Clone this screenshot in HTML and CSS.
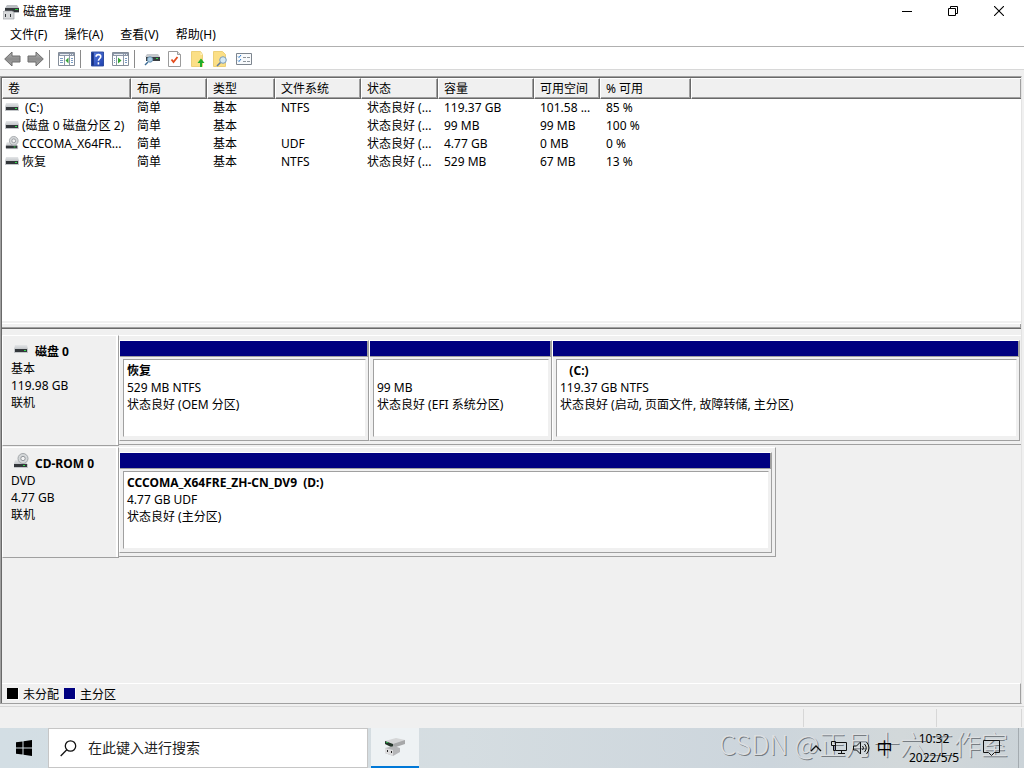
FILE: index.html
```html
<!DOCTYPE html>
<html lang="zh-CN">
<head>
<meta charset="utf-8">
<title>磁盘管理</title>
<link rel="stylesheet" href="styles.css">
</head>
<body>
<svg class="defs" aria-hidden="true">
  <defs>
    <linearGradient id="metal" x1="0" y1="0" x2="0" y2="1"><stop offset="0" stop-color="#e4e6e8"/><stop offset="1" stop-color="#c3c6c9"/></linearGradient>
    <linearGradient id="arrow" x1="0" y1="0" x2="0" y2="1"><stop offset="0" stop-color="#b4b4b4"/><stop offset=".5" stop-color="#8d8d8d"/><stop offset="1" stop-color="#a8a8a8"/></linearGradient>
    <linearGradient id="help" x1="0" y1="0" x2="1" y2="1"><stop offset="0" stop-color="#5a7fe0"/><stop offset="1" stop-color="#1d3fae"/></linearGradient>
    <symbol id="drive" viewBox="0 0 14 16">
      <path d="M1 4h12l1 4H0z" fill="url(#metal)"/><path d="M0 8h14v4H0z" fill="#c3c6c9"/><path d="M1 8h12v3H1z" fill="#33373b"/><path d="M10 9h2v1h-2z" fill="#2fe04a"/>
    </symbol>
    <symbol id="cd" viewBox="0 0 16 16">
      <path d="M2 7h10l2 4H1z" fill="url(#metal)"/><path d="M1 11h14v4H1z" fill="#c3c6c9"/><path d="M1 11h13v3H1z" fill="#33373b"/><path d="M10 12h2v1h-2z" fill="#2fe04a"/>
      <circle cx="10" cy="5.500" r="5" fill="#d4d7d9" stroke="#a3a7aa"/><circle cx="10" cy="5.500" r="2.200" fill="#f4f4f4" stroke="#92969a"/>
    </symbol>
    <symbol id="app" viewBox="0 0 16 16">
      <path d="M4 1h10l2 3v5H2V4z" fill="#babdc1"/><path d="M2 4h14v4H2z" fill="#34383b"/><path d="M12 5h3v1h-3z" fill="#26d43a"/><path d="M1 7h8l2 1v7H0V8z" fill="#d7d9db" stroke="#92969a" stroke-width=".6"/><path d="M2 10h1v3H2zM7 10h1v3H7z" fill="#303437"/>
    </symbol>
  </defs>
</svg>

<header class="titlebar">
  <svg class="app-icon" width="16" height="16"><use href="#app"/></svg>
  <h1 class="title">磁盘管理</h1>
  <div class="window-buttons">
    <button type="button" aria-label="最小化"><svg width="10" height="10" viewBox="0 0 10 10"><path d="M0 5h10v1H0z"/></svg></button>
    <button type="button" aria-label="还原"><svg width="10" height="10" viewBox="0 0 10 10" fill="none" stroke="#000"><path d="M.5 2.500h7v7h-7zM2.500 2.500v-2h7v7h-2"/></svg></button>
    <button type="button" aria-label="关闭"><svg width="10" height="10" viewBox="0 0 10 10" stroke="#000" stroke-width="1.100"><path d="M0 0l10 10M10 0L0 10"/></svg></button>
  </div>
</header>

<nav class="menubar">
  <button type="button">文件(F)</button>
  <button type="button">操作(A)</button>
  <button type="button">查看(V)</button>
  <button type="button">帮助(H)</button>
</nav>

<div class="toolbar" role="toolbar">
  <button type="button" aria-label="后退"><svg width="17" height="16" viewBox="0 0 17 16"><path d="M.7 8L8 1v4h8v6H8v4z" fill="url(#arrow)" stroke="#6c6c6c"/></svg></button>
  <button type="button" aria-label="前进"><svg width="17" height="16" viewBox="0 0 17 16"><path d="M16.300 8L9 1v4H1v6h8v4z" fill="url(#arrow)" stroke="#6c6c6c"/></svg></button>
  <span class="sep"></span>
  <button type="button" aria-label="显示控制台树"><svg width="17" height="14" viewBox="0 0 17 14"><path d="M.5.500h16v13H.5z" fill="#fff" stroke="#848d99"/><path d="M1 1h15v3H1z" fill="#8c97a8"/><path d="M2 2.500h9M12 2.500h1M14 2.500h1" stroke="#e7ebf0"/><path d="M6.500 4v9M11.500 4v9" stroke="#8c97a8"/><path d="M2 6.500h3M2 8.500h3M2 10.500h3M13 6.500h2M13 8.500h2M13 10.500h2" stroke="#7a9cc4"/><path d="M10.500 5.500v6L7.500 8.500z" fill="#35a535"/></svg></button>
  <span class="sep"></span>
  <button type="button" aria-label="帮助"><svg width="13" height="16" viewBox="0 0 14 16"><path d="M.5.500h13v15H.5z" fill="url(#help)" stroke="#23439a"/><path d="M1 1h2v14H1z" fill="#173184"/><path d="M5.500 5.500c0-3 5-3 5 0 0 2-2.500 2-2.500 4.500M8 11.500V14" fill="none" stroke="#fff" stroke-width="1.700"/></svg></button>
  <button type="button" aria-label="显示操作窗格"><svg width="17" height="14" viewBox="0 0 17 14"><path d="M.5.500h16v13H.5z" fill="#fff" stroke="#848d99"/><path d="M1 1h15v3H1z" fill="#8c97a8"/><path d="M2 2.500h9M12 2.500h1M14 2.500h1" stroke="#e7ebf0"/><path d="M4.500 4v9M11.500 4v9" stroke="#8c97a8"/><path d="M2 6.500h1M2 8.500h1M2 10.500h1M13 6.500h2M13 8.500h2M13 10.500h2" stroke="#7a9cc4"/><path d="M6 5.500v6l3.500-3z" fill="#35a535"/></svg></button>
  <span class="sep"></span>
  <button type="button" aria-label="磁盘"><svg width="16" height="16" viewBox="0 0 16 16"><path d="M3 3h11l2 3H1z" fill="#c5c9cd"/><path d="M2 6h14v4H2z" fill="#393e42"/><path d="M12 7h2v1h-2z" fill="#35d94a"/><path d="M1 14l3-3" stroke="#3b6b94" stroke-width="1.500"/><circle cx="6" cy="8.500" r="2.700" fill="#a9cbe2" stroke="#6c93b2"/></svg></button>
  <button type="button" aria-label="属性"><svg width="13" height="16" viewBox="0 0 13 16"><path d="M.5.500h9l3 3v12H.5z" fill="#fff" stroke="#9b9b9b"/><path d="M9.500.500v3h3" fill="#e0e0e0" stroke="#9b9b9b"/><path d="M3.500 8.500l2 2.500 4-5" fill="none" stroke="#e44b1c" stroke-width="1.800"/></svg></button>
  <button type="button" aria-label="向上"><svg width="14" height="16" viewBox="0 0 14 16"><path d="M.5.500h9l2 3v12H.5z" fill="#fbdf86" stroke="#ecd079"/><path d="M9.500 1v3h2" fill="#fff4c4"/><path d="M9 16v-4H6.500L10 7.500l3.500 4.500H11v4z" fill="#20ad2a"/></svg></button>
  <button type="button" aria-label="查找"><svg width="15" height="16" viewBox="0 0 15 16"><path d="M.5.500h9l3 3v12H.5z" fill="#fbdf86" stroke="#ecd079"/><path d="M4 15l4-4" stroke="#637da0" stroke-width="1.600"/><circle cx="10" cy="9" r="3.300" fill="#d4e9f5" stroke="#7d9db8"/></svg></button>
  <button type="button" aria-label="选项"><svg width="16" height="12" viewBox="0 0 16 12"><path d="M.5.500h15v11H.5z" fill="#f8fafc" stroke="#7d858e"/><path d="M2 3.500l1 1 2-2.500M2 7.500l1 1 2-2.500" fill="none" stroke="#2b78c8"/><path d="M7 4.500h3M11 4.500h3M7 8.500h3M11 8.500h3" stroke="#8e959c"/></svg></button>
</div>

<main class="workspace">
  <section class="volumes">
    <table class="volume-table">
      <colgroup><col class="c-name"><col class="c-layout"><col class="c-type"><col class="c-fs"><col class="c-state"><col class="c-size"><col class="c-free"><col class="c-pct"><col></colgroup>
      <thead><tr><th>卷</th><th>布局</th><th>类型</th><th>文件系统</th><th>状态</th><th>容量</th><th>可用空间</th><th>% 可用</th><th></th></tr></thead>
      <tbody>
        <tr><td><svg width="14" height="16"><use href="#drive"/></svg>&nbsp;(C:)</td><td>简单</td><td>基本</td><td>NTFS</td><td>状态良好 (...</td><td>119.37 GB</td><td>101.58 ...</td><td>85 %</td><td></td></tr>
        <tr><td><svg width="14" height="16"><use href="#drive"/></svg>(磁盘 0 磁盘分区 2)</td><td>简单</td><td>基本</td><td></td><td>状态良好 (...</td><td>99 MB</td><td>99 MB</td><td>100 %</td><td></td></tr>
        <tr><td><svg width="14" height="16"><use href="#cd"/></svg>CCCOMA_X64FR...</td><td>简单</td><td>基本</td><td>UDF</td><td>状态良好 (...</td><td>4.77 GB</td><td>0 MB</td><td>0 %</td><td></td></tr>
        <tr><td><svg width="14" height="16"><use href="#drive"/></svg>恢复</td><td>简单</td><td>基本</td><td>NTFS</td><td>状态良好 (...</td><td>529 MB</td><td>67 MB</td><td>13 %</td><td></td></tr>
      </tbody>
    </table>
  </section>
  <div class="splitter"></div>

  <section class="disks">
    <article class="disk">
      <div class="disk-label">
        <h2><svg width="14" height="16"><use href="#drive"/></svg>磁盘 0</h2>
        <p>基本</p><p>119.98 GB</p><p>联机</p>
      </div>
      <div class="track track-full">
        <div class="part"><div class="bar"></div><div class="info"><b>恢复</b><p>529 MB NTFS</p><p>状态良好 (OEM 分区)</p></div></div>
        <div class="part"><div class="bar"></div><div class="info"><b>&nbsp;</b><p>99 MB</p><p>状态良好 (EFI 系统分区)</p></div></div>
        <div class="part"><div class="bar"></div><div class="info"><b>&nbsp;&nbsp; (C:)</b><p>119.37 GB NTFS</p><p>状态良好 (启动, 页面文件, 故障转储, 主分区)</p></div></div>
      </div>
    </article>
    <article class="disk">
      <div class="disk-label">
        <h2><svg width="16" height="16"><use href="#cd"/></svg>CD-ROM 0</h2>
        <p>DVD</p><p>4.77 GB</p><p>联机</p>
      </div>
      <div class="track track-cd">
        <div class="part"><div class="bar"></div><div class="info"><b>CCCOMA_X64FRE_ZH-CN_DV9&nbsp; (D:)</b><p>4.77 GB UDF</p><p>状态良好 (主分区)</p></div></div>
      </div>
    </article>
  </section>
  <div class="legend">
    <span class="swatch"></span><span>未分配</span>
    <span class="swatch primary"></span><span>主分区</span>
  </div>
</main>

<div class="statusbar"><span></span><span></span><span></span></div>

<footer class="taskbar">
  <button class="start" type="button" aria-label="开始"><svg width="16" height="16" viewBox="0 0 16 16"><path d="M0 2.300l6.500-.9v6.100H0zM7.500 1.200L16 0v7.500H7.500zM0 8.500h6.500v6.100L0 13.700zM7.500 8.500H16V16l-8.500-1.200z"/></svg></button>
  <label class="search"><svg width="17" height="17" viewBox="0 0 17 17" fill="none" stroke="#111" stroke-width="1.300"><circle cx="10.500" cy="6" r="5.200"/><path d="M6.800 9.800L.7 16"/></svg><input type="text" placeholder="在此键入进行搜索" aria-label="搜索"></label>
  <button class="task" type="button" aria-label="磁盘管理"><svg width="24" height="22" viewBox="0 0 24 22"><path d="M2 5l11-3 9 2v3L10 11 2 8z" fill="#d5d6d7"/><path d="M2 5l8 3v4L2 8z" fill="#25352a"/><path d="M10 8l12-4v4l-12 4z" fill="#a7a8a9"/><path d="M2 12l9-2 6 2v4l-7 4-8-3z" fill="#b5b6b8"/><path d="M2 12l8 2v6l-8-3z" fill="#dcdcdd"/><path d="M4 14h1v2H4zM8 15h1v2H8z" fill="#222"/><path d="M3 6h2v1H3z" fill="#2ab149"/></svg></button>
  <div class="watermark">CSDN @正月十六工作室</div>
  <div class="tray">
    <button type="button" aria-label="显示隐藏的图标"><svg width="12" height="8" viewBox="0 0 12 8" fill="none" stroke="#111" stroke-width="1.300"><path d="M1 7l5-5 5 5"/></svg></button>
    <button type="button" aria-label="网络"><svg width="16" height="14" viewBox="0 0 16 14" fill="none" stroke="#111"><path d="M4.500 1.500h11v8h-11zM10.500 9.500v3M7 12.500h7M.5.500h4v4h-4zM2.500 4.500v5h2"/></svg></button>
    <button type="button" aria-label="音量"><svg width="17" height="14" viewBox="0 0 17 14" fill="none" stroke="#111"><path d="M.5 5h3l4-4v12l-4-4h-3zM9.500 5q2 2 0 4M11.500 3q3.500 4 0 8M13.500 1q5 6 0 12"/></svg></button>
    <button type="button" class="ime">中</button>
    <div class="clock"><time>10:32</time><time>2022/5/5</time></div>
    <button type="button" class="notice" aria-label="通知"><svg width="17" height="16" viewBox="0 0 17 16" fill="none" stroke="#111"><path d="M.5.500h16v12h-5l-3 3-3-3h-5z"/></svg></button>
    <span class="desktop"></span>
  </div>
</footer>
</body>
</html>
```
FILE: styles.css
```css
* { box-sizing: border-box; }
html, body { height: 100%; }
body {
  margin: 0;
  display: flex;
  flex-direction: column;
  overflow: hidden;
  background: #f0f0f0;
  color: #000;
  font: 12px/17px "Noto Sans", "Noto Sans CJK SC", sans-serif;
}
button { font: inherit; color: inherit; border: 0; padding: 0; background: transparent; display: flex; align-items: center; justify-content: center; }
h1, h2, p { margin: 0; font-size: 12px; font-weight: 400; }
svg { flex: none; display: block; }
.defs { position: absolute; width: 0; height: 0; }

.titlebar { flex: none; height: 23px; background: #fff; display: flex; align-items: center; padding-left: 3px; }
.title { margin-left: 4px; }
.window-buttons { margin-left: auto; display: flex; align-self: stretch; padding: 0 2px 2px 0; }
.window-buttons button { width: 46px; }

.menubar { flex: none; height: 24px; background: #fff; border-bottom: 1px solid #b0b0b0; display: flex; gap: 1px; padding-left: 2px; }
.menubar button { padding: 0 8px; }

.toolbar { flex: none; height: 23px; background: #fff; border-bottom: 1px solid #d8d8d8; display: flex; align-items: stretch; padding: 2px 1px 0; }
.toolbar button { width: 23px; }
.sep { width: 1px; background: #8a8a8a; margin: 1px 4px 1px 2px; }
.sep + button { margin-left: 1px; }

.workspace { flex: 1; min-height: 0; margin: 6px 2px 0 0; border: 1px solid #a0a0a0; border-right-color: #e3e3e3; box-shadow: inset 1px 1px 0 #696969; padding: 1px 0 0 1px; display: flex; flex-direction: column; }
.volumes { flex: none; height: 243px; background: #fff; }
.volume-table { width: 100%; table-layout: fixed; border-collapse: separate; border-spacing: 0; }
.c-name { width: 129px; } .c-layout { width: 76px; } .c-type { width: 68px; } .c-fs { width: 86px; } .c-state { width: 77px; }
.c-size { width: 96px; } .c-free { width: 66px; } .c-pct { width: 91px; }
th { height: 21px; padding: 1px 5px 0; text-align: left; font-weight: 400; background: #f0f0f0; border: 1px solid #fff; border-right-color: #696969; border-bottom-color: #696969; box-shadow: inset -1px -1px 0 #a0a0a0; line-height: 18px; }
th:last-child { border-right: 0; }
td { height: 18px; padding: 0 0 0 6px; line-height: 18px; white-space: nowrap; overflow: hidden; }
td:first-child { padding-left: 3px; }
td svg { float: left; margin-right: 3px; }

.splitter { flex: none; height: 8px; background: #f0f0f0; border-top: 2px solid #f0f0f0; border-bottom: 1px solid #696969; box-shadow: inset 0 1px 0 #fff, inset -1px -1px 0 #a0a0a0; }

.disks { flex: 1; min-height: 0; padding-top: 6px; overflow: hidden; }
.disk { display: flex; align-items: flex-start; margin-bottom: 1px; }
.disk-label { flex: none; width: 117px; height: 111px; padding: 7px 0 0 8px; border: 1px solid #fff; border-bottom-color: #a0a0a0; border-right-color: #a0a0a0; box-shadow: inset -2px 0 0 #fff; }
.disk-label h2 { display: flex; align-items: center; padding-left: 2px; font-weight: 700; }
.disk-label h2 svg { width: 16px; margin-right: 6px; margin-top: -6px; }
.track { flex: 1; display: grid; border-top: 1px solid #fff; border-bottom: 1px solid #a0a0a0; padding: 4px 1px 3px 0; }
.track-full { grid-template-columns: 250fr 183fr 468fr; }
.track-cd { flex: none; width: 64.5%; border-right: 1px solid #a0a0a0; padding-right: 3px; }
.part { min-width: 0; border: 1px solid #fff; border-right-color: #a0a0a0; border-bottom-color: #a0a0a0; }
.bar { height: 16px; background: #000080; border-bottom: 1px solid #a0a0a0; border-right: 1px solid #a0a0a0; }
.info { height: 78px; margin: 2px 2px 3px 3px; padding: 2px 0 0 3px; background: #fff; border: 1px solid #f0f0f0; border-top-color: #a0a0a0; border-left-color: #a0a0a0; white-space: nowrap; overflow: hidden; }
.info b { display: block; }

.legend { flex: none; height: 20px; border-top: 1px solid #fff; border-right: 1px solid #a0a0a0; display: flex; align-items: center; padding: 1px 0 0 4px; }
.swatch { width: 12px; height: 12px; background: #000; border: 1px solid #fff; border-width: 0 1px 1px 0; margin: 0 4px 0 1px; }
.swatch.primary { background: #000080; margin-left: 5px; }

.statusbar { flex: none; height: 22px; margin-top: 2px; border-top: 1px solid #d7d7d7; padding: 2px 2px 1px 0; display: flex; }
.statusbar span { border-right: 1px solid #d7d7d7; width: 133px; }
.statusbar span:first-child { flex: 1; }
.statusbar span:last-child { width: 85px; }

.taskbar { flex: none; position: relative; height: 40px; display: flex; background: linear-gradient(90deg, #d3dee4, #d5dde1 45%, #ccd5dc 75%, #d2d8da 88%, #cbd3d8); }
.start { width: 48px; }
.search { width: 320px; margin-right: 3px; background: #fff; border: 1px solid #c6c6c6; display: flex; align-items: center; padding-left: 11px; gap: 11px; }
.search input { flex: 1; min-width: 0; border: 0; padding: 0; background: transparent; outline: 0; color: #222; font: 14px/20px "Noto Sans", "Noto Sans CJK SC", sans-serif; }
.search input::placeholder { color: #222; opacity: 1; }
.task { width: 48px; background: #eef2f4; border-bottom: 2px solid #0078d7; }
.tray { margin-left: auto; display: flex; position: relative; }
.tray button { width: 23px; }
.tray .ime { font-size: 16px; }
.clock { width: 76px; display: flex; flex-direction: column; text-align: center; line-height: 19px; padding-top: 1px; }
.tray .notice { width: 40px; padding-right: 2px; margin-right: 6px; }
.desktop { width: 6px; border-left: 1px solid #a4abb0; }
.watermark { position: absolute; right: 16px; top: -3px; font: 300 27px/38px "Noto Sans CJK SC", sans-serif; color: #dcdfe1; text-shadow: 1px 1px 0 #777d82; pointer-events: none; white-space: nowrap; }
```
